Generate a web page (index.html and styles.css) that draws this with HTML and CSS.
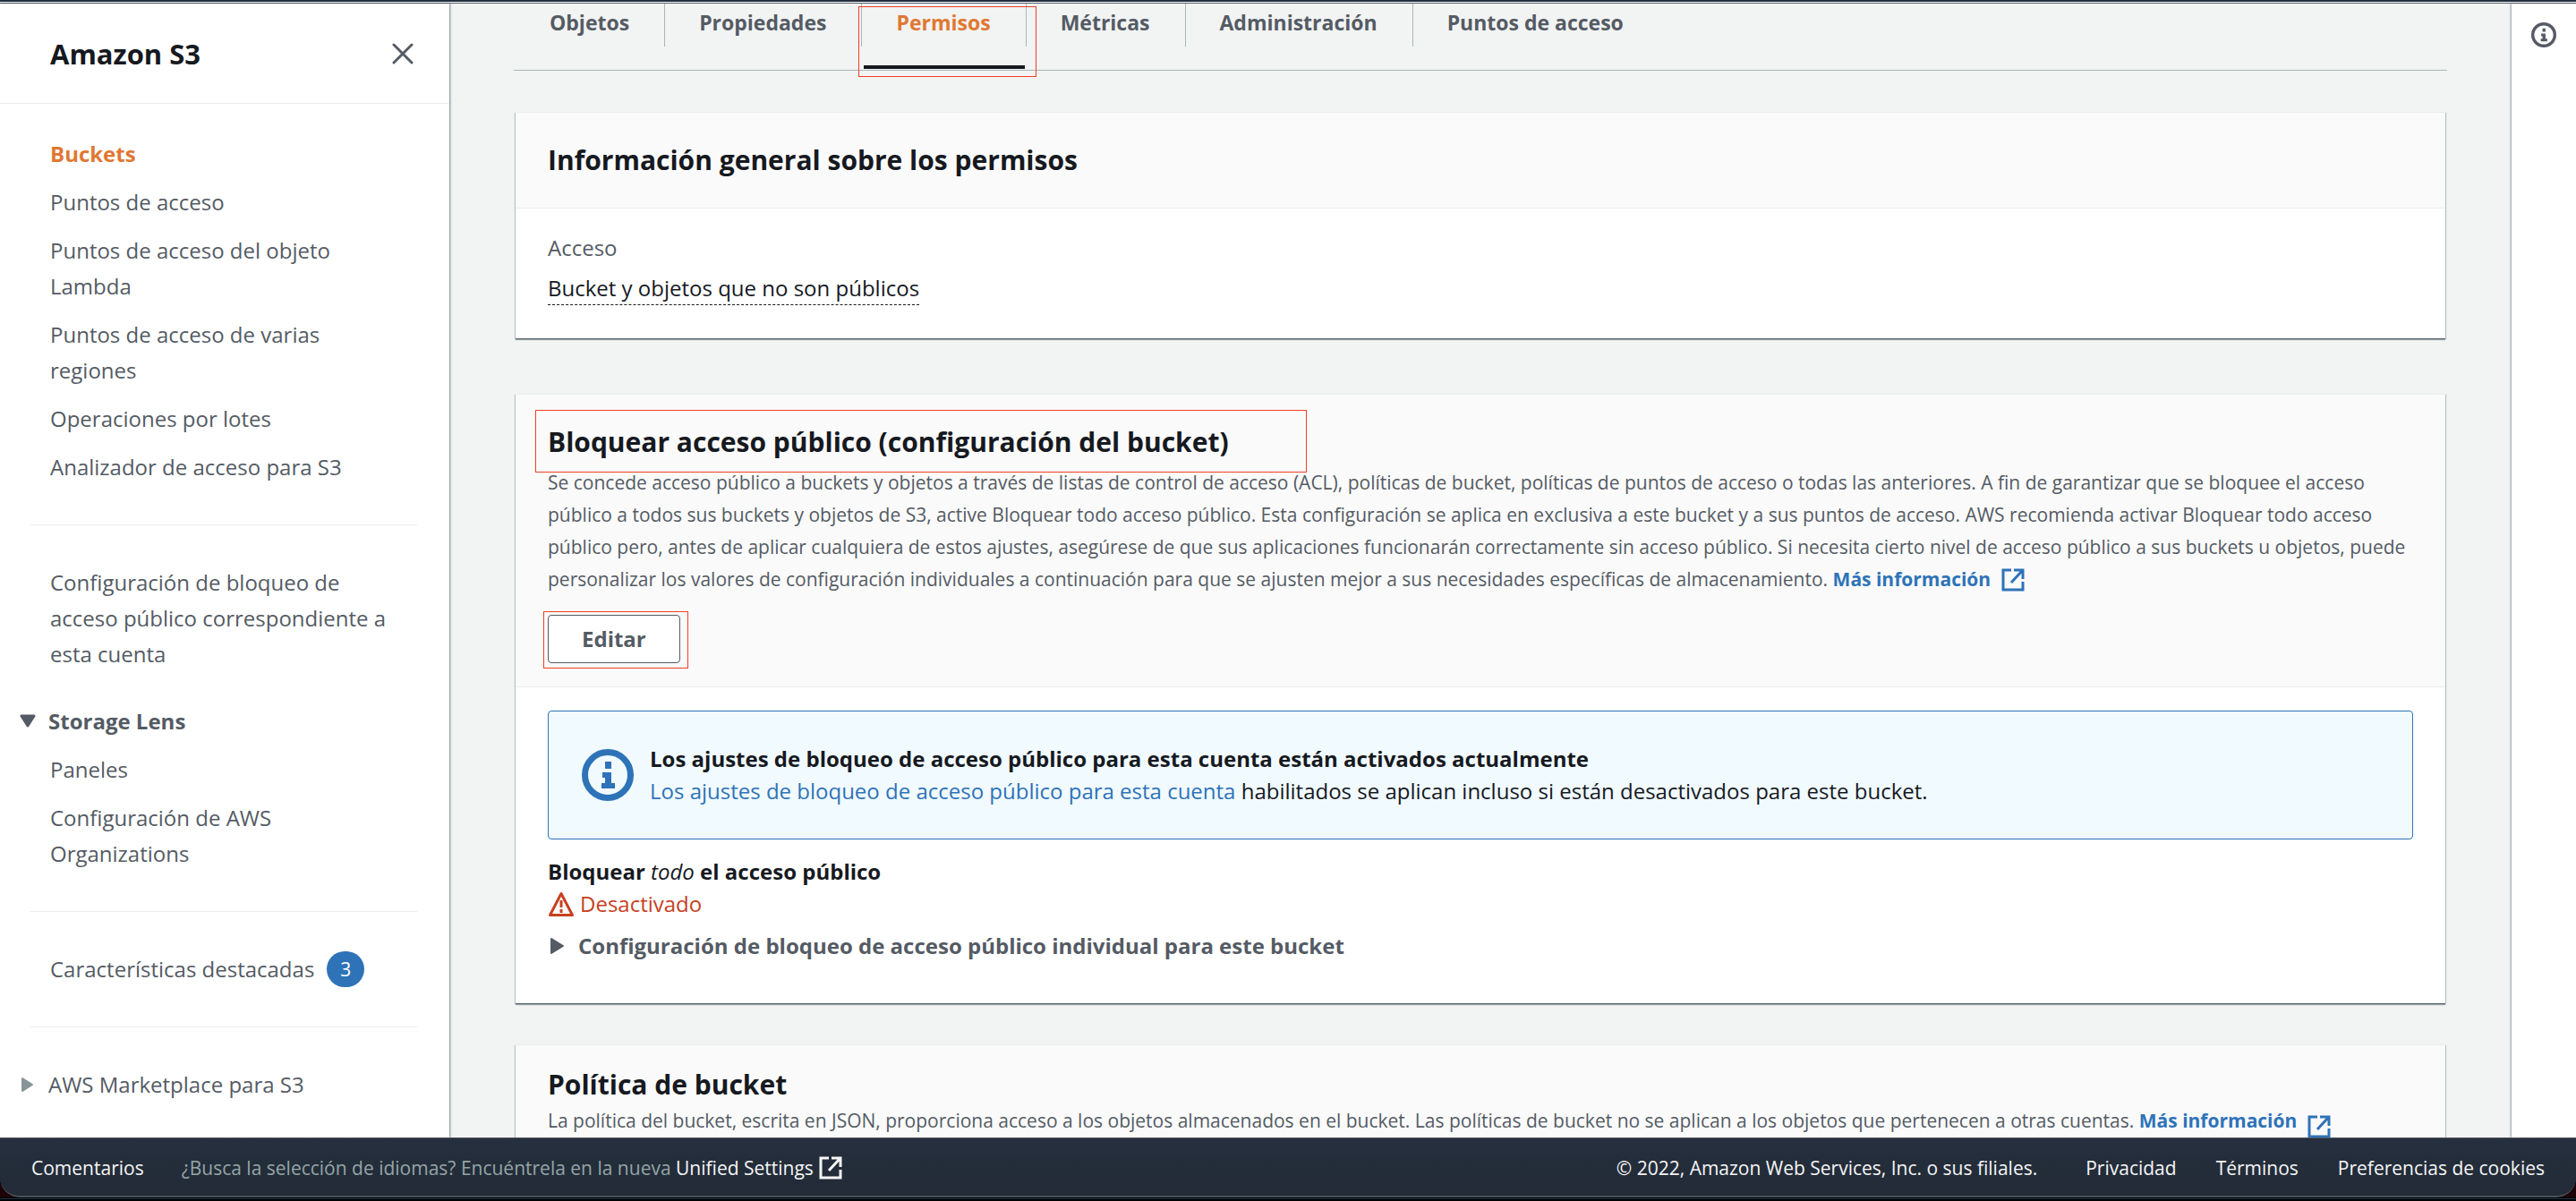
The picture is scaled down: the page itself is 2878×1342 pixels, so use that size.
FILE: index.html
```
<!DOCTYPE html>
<html lang="es">
<head>
<meta charset="utf-8">
<meta name="viewport" content="width=device-width, initial-scale=1">
<title>Amazon S3 - Permisos</title>
<link rel="stylesheet" href="styles.css">
</head>
<body>
<svg class="sprite" aria-hidden="true">
  <symbol id="external" viewBox="0 0 26 26">
    <path d="M11 2H2v22h22v-9M14 2h10v10M23 3L11 16" fill="none" stroke="currentColor" stroke-width="3"/>
  </symbol>
  <symbol id="info" viewBox="0 0 58 58">
    <circle cx="29" cy="29" r="25.5" fill="none" stroke="currentColor" stroke-width="7"/>
    <path d="M26 14h7v8h-7zM23 26h10v12h4v6H22v-6h4v-6h-3z" fill="currentColor"/>
  </symbol>
</svg>
<div class="topbar"></div>
<div class="layout">
  <nav class="sidebar" aria-label="Amazon S3">
    <div class="sidebar-header">
      <h2 class="sidebar-title">Amazon S3</h2>
      <button class="icon-button" type="button" aria-label="Cerrar">
        <svg width="24" height="24" viewBox="0 0 24 24"><path d="M2 2l20 20M22 2L2 22" stroke="currentColor" stroke-width="3" stroke-linecap="round"/></svg>
      </button>
    </div>
    <div class="sidebar-body">
      <ul class="nav-list">
        <li><a class="nav-link nav-link-active" href="#">Buckets</a></li>
        <li><a class="nav-link" href="#">Puntos de acceso</a></li>
        <li><a class="nav-link" href="#">Puntos de acceso del objeto Lambda</a></li>
        <li><a class="nav-link" href="#">Puntos de acceso de varias regiones</a></li>
        <li><a class="nav-link" href="#">Operaciones por lotes</a></li>
        <li><a class="nav-link" href="#">Analizador de acceso para S3</a></li>
      </ul>
      <hr class="nav-divider">
      <ul class="nav-list">
        <li><a class="nav-link" href="#">Configuración de bloqueo de acceso público correspondiente a esta cuenta</a></li>
      </ul>
      <button class="nav-toggle nav-toggle-open" type="button" aria-expanded="true">
        <svg width="18" height="16" viewBox="0 0 18 16"><path d="M2 2h14l-7 11z" fill="currentColor" stroke="currentColor" stroke-width="3" stroke-linejoin="round"/></svg>
        Storage Lens
      </button>
      <ul class="nav-list">
        <li><a class="nav-link" href="#">Paneles</a></li>
        <li><a class="nav-link" href="#">Configuración de AWS Organizations</a></li>
      </ul>
      <hr class="nav-divider">
      <a class="nav-link nav-link-badge" href="#">Características destacadas <span class="badge">3</span></a>
      <hr class="nav-divider">
      <button class="nav-toggle" type="button" aria-expanded="false">
        <svg class="toggle-muted" width="18" height="18" viewBox="0 0 18 18"><path d="M3 2v14l11-7z" fill="currentColor" stroke="currentColor" stroke-width="2" stroke-linejoin="round"/></svg>
        AWS Marketplace para S3
      </button>
    </div>
  </nav>

  <main class="content">
    <ul class="tabs">
      <li class="tab"><a class="tab-link" href="#">Objetos</a></li>
      <li class="tab"><a class="tab-link" href="#">Propiedades</a></li>
      <li class="tab tab-active"><a class="tab-link" href="#" aria-current="page">Permisos</a><span class="mark mark-tab"></span></li>
      <li class="tab"><a class="tab-link" href="#">Métricas</a></li>
      <li class="tab"><a class="tab-link" href="#">Administración</a></li>
      <li class="tab"><a class="tab-link" href="#">Puntos de acceso</a></li>
    </ul>

    <div class="cards">
      <section class="card card-overview">
        <header class="card-header">
          <h2 class="card-title">Información general sobre los permisos</h2>
        </header>
        <dl class="card-body facts">
          <dt class="fact-label">Acceso</dt>
          <dd class="fact-value"><span class="dashed">Bucket y objetos que no son públicos</span></dd>
        </dl>
      </section>

      <section class="card">
        <header class="card-header card-header-tall">
          <div class="marked"><h2 class="card-title">Bloquear acceso público (configuración del bucket)</h2><span class="mark mark-title"></span></div>
          <p class="card-description">Se concede acceso público a buckets y objetos a través de listas de control de acceso (ACL), políticas de bucket, políticas de puntos de acceso o todas las anteriores. A fin de garantizar que se bloquee el acceso público a todos sus buckets y objetos de S3, active Bloquear todo acceso público. Esta configuración se aplica en exclusiva a este bucket y a sus puntos de acceso. AWS recomienda activar Bloquear todo acceso público pero, antes de aplicar cualquiera de estos ajustes, asegúrese de que sus aplicaciones funcionarán correctamente sin acceso público. Si necesita cierto nivel de acceso público a sus buckets u objetos, puede personalizar los valores de configuración individuales a continuación para que se ajusten mejor a sus necesidades específicas de almacenamiento. <a class="learn-more" href="#">Más información <svg class="external"><use href="#external"/></svg></a></p>
          <div class="marked"><button class="button" type="button">Editar</button><span class="mark mark-button"></span></div>
        </header>
        <div class="card-body">
          <div class="alert">
            <svg class="alert-icon"><use href="#info"/></svg>
            <div>
              <p class="strong">Los ajustes de bloqueo de acceso público para esta cuenta están activados actualmente</p>
              <p><a class="link" href="#">Los ajustes de bloqueo de acceso público para esta cuenta</a> habilitados se aplican incluso si están desactivados para este bucket.</p>
            </div>
          </div>
          <p class="strong">Bloquear <em class="all">todo</em> el acceso público</p>
          <p class="status">
            <svg width="30" height="30" viewBox="0 0 30 30"><path d="M15 3.500L27.500 27.500H2.500z" fill="none" stroke="currentColor" stroke-width="3" stroke-linejoin="round"/><path d="M15 11v8M15 21v4" stroke="currentColor" stroke-width="3"/></svg>
            Desactivado
          </p>
          <button class="expander" type="button" aria-expanded="false">
            <svg width="20" height="20" viewBox="0 0 20 20"><path d="M4 2v16l13-8z" fill="currentColor" stroke="currentColor" stroke-width="2" stroke-linejoin="round"/></svg>
            Configuración de bloqueo de acceso público individual para este bucket
          </button>
        </div>
      </section>

      <section class="card">
        <header class="card-header card-header-compact">
          <h2 class="card-title">Política de bucket</h2>
          <p class="card-description">La política del bucket, escrita en JSON, proporciona acceso a los objetos almacenados en el bucket. Las políticas de bucket no se aplican a los objetos que pertenecen a otras cuentas. <a class="learn-more" href="#">Más información <svg class="external external-low"><use href="#external"/></svg></a></p>
        </header>
      </section>
    </div>
  </main>

  <aside class="tools">
    <button class="icon-button" type="button" aria-label="Información"><svg width="28" height="28"><use href="#info"/></svg></button>
  </aside>
</div>

<footer class="footer">
  <a class="footer-link" href="#">Comentarios</a>
  <p class="footer-language">¿Busca la selección de idiomas? Encuéntrela en la nueva <a class="footer-link" href="#">Unified Settings <svg class="footer-external"><use href="#external"/></svg></a></p>
  <p class="copyright">© 2022, Amazon Web Services, Inc. o sus filiales.</p>
  <ul class="footer-links">
    <li><a class="footer-link" href="#">Privacidad</a></li>
    <li><a class="footer-link" href="#">Términos</a></li>
    <li><a class="footer-link" href="#">Preferencias de cookies</a></li>
  </ul>
</footer>
<div class="window-edge"></div>
</body>
</html>
```
FILE: styles.css
```
* { box-sizing: border-box; }

body {
  margin: 0;
  height: 100vh;
  display: flex;
  flex-direction: column;
  overflow: hidden;
  background: #1c0408;
  color: #16191f;
  font: 24px/36px "Open Sans", "Noto Sans", sans-serif;
}

h2, p, ul, dl, dd { margin: 0; padding: 0; }
ul { list-style: none; }
a { text-decoration: none; }
svg { flex: none; }
button { font: inherit; color: inherit; margin: 0; padding: 0; border: 0; background: none; cursor: pointer; }

.sprite { position: absolute; width: 0; height: 0; }

.topbar { flex: none; height: 4px; background: #232f3e; border-bottom: 1px solid #545b64; box-shadow: inset 0 -1px #ffffff; }

.layout { flex: 1; min-height: 0; display: grid; grid-template-columns: 502px 1fr 72px; background: #f2f3f3; }

/* Sidebar */
.sidebar { background: #ffffff; overflow: hidden; box-shadow: 1px 0 2px rgba(0, 28, 36, 0.5); color: #545b64; line-height: 40px; }
.sidebar-header { height: 112px; padding: 0 38px 0 56px; display: flex; align-items: center; justify-content: space-between; border-bottom: 1px solid #eaeded; }
.sidebar-title { font-size: 31px; color: #16191f; }
.icon-button { display: flex; padding: 2px; color: #545b64; }
.sidebar-body { padding: 36px 36px 0 34px; }
.nav-list { display: grid; gap: 14px; padding: 0 22px; }
.nav-link { display: block; color: #545b64; }
.nav-link-active { color: #e07832; font-weight: 700; }
.nav-divider { margin: 44px 0; border: 0; border-top: 1px solid #eaeded; }
.nav-toggle { display: flex; align-items: center; gap: 14px; margin-left: -12px; line-height: 40px; }
.nav-toggle-open { margin-top: 35px; margin-bottom: 14px; font-weight: 700; }
.toggle-muted { color: #879596; }
.nav-link-badge { display: flex; align-items: center; gap: 14px; padding-left: 22px; }
.badge { width: 42px; height: 40px; border-radius: 20px; background: #2e73b8; color: #ffffff; font-size: 21px; text-align: center; }

/* Main column */
.content { overflow: hidden; padding: 0 72px; }
.tabs { display: flex; padding: 0 0 26px 2px; border-bottom: 1px solid #aab7b8; }
.tab { position: relative; padding: 0 39px 6px 38px; border-right: 1px solid #aab7b8; }
.tab:last-child { border-right: 0; }
.tab-link { display: block; font-size: 23px; line-height: 42px; font-weight: 700; color: #545b64; }
.tab-active .tab-link { color: #e07832; }
.tab-active::after { content: ""; position: absolute; left: 2px; right: 1px; bottom: -25px; height: 4px; background: #16191f; }

/* Highlight frames drawn over the page */
.marked { position: relative; width: fit-content; }
.mark { position: absolute; border: 1px solid #ef4023; pointer-events: none; }
.mark-tab { left: -4px; right: -12px; top: 3px; bottom: -34px; }
.mark-title { left: -14px; right: -87px; top: -16px; bottom: -14px; }
.mark-button { left: -5px; right: -9px; top: -4px; bottom: -6px; }

.cards { padding: 46px 2px 0; }
.card { margin-bottom: 46px; background: #ffffff; border-top: 1px solid #eaeded; box-shadow: 0 1px 1px rgba(0, 28, 36, 0.3), 1px 1px 1px rgba(0, 28, 36, 0.15), -1px 1px 1px rgba(0, 28, 36, 0.15), 0 2px 1px rgba(0, 28, 36, 0.3); }
.card-overview { margin-bottom: 62px; }
.card-header { padding: 33px 36px; background: #fafafa; border-bottom: 1px solid #eaeded; }
.card-header-tall { padding-bottom: 26px; }
.card-header-compact { padding-top: 24px; }
.card-title { font-size: 30px; line-height: 40px; }
.card-description { font-size: 21px; color: #545b64; }
.card-header-tall .card-description { margin: 7px 0 22px; }
.card-header-compact .card-description { margin-top: 2px; }
.learn-more { color: #2e73b8; font-weight: 700; }
.external { width: 26px; height: 26px; margin-left: 6px; vertical-align: -6px; }
.external-low { vertical-align: -12px; }
.card-body { padding: 26px 36px 46px; }
.facts { padding-bottom: 37px; }
.fact-label { color: #545b64; }
.fact-value { display: flex; margin-top: 9px; }
.dashed { border-bottom: 1px dashed #16191f; }
.button { height: 54px; padding: 0 37px; border: 1px solid #545b64; border-radius: 4px; background: #ffffff; color: #545b64; font-weight: 700; display: block; }

.alert { display: flex; align-items: center; gap: 18px; margin-bottom: 18px; padding: 35px 37px; border: 1px solid #2e73b8; border-radius: 4px; background: #f1faff; }
.alert-icon { width: 58px; height: 58px; color: #2e73b8; }
.strong { font-weight: 700; }
.link { color: #2e73b8; }
.all { font-weight: 400; }
.status { display: flex; align-items: center; gap: 6px; color: #c7401f; }
.expander { display: flex; align-items: center; gap: 14px; margin-top: 11px; color: #545b64; font-weight: 700; }

.tools { display: flex; justify-content: center; align-items: flex-start; padding: 19px 0 0; background: #ffffff; box-shadow: -1px 0 2px rgba(0, 28, 36, 0.4); }

/* Footer */
.footer { flex: none; z-index: 1; height: 67px; display: flex; align-items: center; padding: 2px 35px 0; background: linear-gradient(#252f3e, #222b36); border-top: 1px solid #545b64; border-bottom: 2px solid #4a515c; border-radius: 0 0 22px 22px; font-size: 21px; color: #95a5a6; }
.footer-link { color: #f5f5f5; }
.footer-language { margin-left: 42px; }
.footer-external { width: 28px; height: 26px; vertical-align: -5px; }
.copyright { margin-left: auto; color: #f5f5f5; }
.footer-links { display: flex; gap: 44px; margin-left: 54px; }
.window-edge { flex: none; height: 4px; background: #000000; border-top: 1px solid #000000; box-shadow: inset 0 1px #1d3447; }
```
